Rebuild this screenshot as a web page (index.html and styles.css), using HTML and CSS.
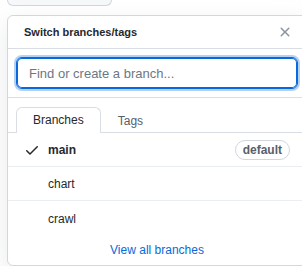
FILE: index.html
```html
<!DOCTYPE html>
<html lang="en">
  <head>
    <meta charset="UTF-8" />
    <meta name="viewport" content="width=device-width, initial-scale=1.0" />
    <title>Switch branches/tags</title>
    <link rel="stylesheet" href="styles.css">
  </head>
  <body>
    <div class="summary-btn"></div>

    <div class="menu">
      <header class="menu-header">
        <span class="menu-title">Switch branches/tags</span>
        <button class="menu-close" aria-label="Close menu">
          <svg width="16" height="16" viewBox="0 0 16 16" aria-hidden="true">
            <path d="M3.72 3.72a.75.75 0 0 1 1.06 0L8 6.94l3.22-3.22a.749.749 0 0 1 1.275.326.749.749 0 0 1-.215.734L9.06 8l3.22 3.22a.749.749 0 0 1-.326 1.275.749.749 0 0 1-.734-.215L8 9.06l-3.22 3.22a.751.751 0 0 1-1.042-.018.751.751 0 0 1-.018-1.042L6.94 8 3.72 4.78a.75.75 0 0 1 0-1.06Z"></path>
          </svg>
        </button>
      </header>

      <div class="menu-filter">
        <input class="filter-input" type="text" placeholder="Find or create a branch..." autofocus />
      </div>

      <nav class="menu-tabs">
        <button class="tab selected">Branches</button>
        <button class="tab">Tags</button>
      </nav>

      <ul class="menu-list">
        <li class="menu-item">
          <svg class="check" width="16" height="16" viewBox="0 0 16 16" aria-hidden="true">
            <path d="M13.78 4.22a.75.75 0 0 1 0 1.06l-7.25 7.25a.75.75 0 0 1-1.06 0L2.22 9.28a.751.751 0 0 1 .018-1.042.751.751 0 0 1 1.042-.018L6 10.94l6.72-6.72a.75.75 0 0 1 1.06 0Z"></path>
          </svg>
          <span class="branch-name current">main</span>
          <span class="label">default</span>
        </li>
        <li class="menu-item">
          <span class="check-space"></span>
          <span class="branch-name">chart</span>
        </li>
        <li class="menu-item">
          <span class="check-space"></span>
          <span class="branch-name">crawl</span>
        </li>
      </ul>

      <footer class="menu-footer">
        <a href="#" class="view-all">View all branches</a>
      </footer>
    </div>
  </body>
</html>
```

FILE: styles.css
```css
:root {
  font-family: "Liberation Sans", Arial, sans-serif;
  color: #24292f;
}

*,
*::before,
*::after {
  box-sizing: border-box;
}

body {
  margin: 0;
  padding: 0 0 0 7px;
  background: #fff;
  overflow: hidden;
}

.summary-btn {
  width: 105px;
  height: 6px;
  background: #f6f8fa;
  border: 1px solid #d0d7de;
  border-top: 0;
  border-radius: 0 0 6px 6px;
}

.menu {
  width: 300px;
  margin-top: 9px;
  background: #fff;
  border: 1px solid #d0d7de;
  border-radius: 6px;
  box-shadow: 0 8px 24px rgba(140, 149, 159, 0.2);
}

.menu-header {
  display: flex;
  align-items: center;
  justify-content: space-between;
  height: 33px;
  padding: 0 16px;
  border-bottom: 1px solid #d8dee4;
}

.menu-title {
  font-size: 11px;
  font-weight: 600;
}

.menu-close {
  display: flex;
  padding: 0;
  margin-right: -3px;
  border: 0;
  background: none;
  fill: #8c959f;
  cursor: pointer;
}

.menu-filter {
  padding: 8px;
  border-bottom: 1px solid #d8dee4;
}

.filter-input {
  display: block;
  width: 100%;
  height: 32px;
  padding: 0 12px;
  font-family: inherit;
  font-size: 13px;
  color: #24292f;
  border: 1px solid #0969da;
  border-radius: 6px;
  outline: none;
  box-shadow: inset 0 0 0 1px #0969da, 0 0 0 2px rgba(9, 105, 218, 0.3);
}

.filter-input::placeholder {
  color: #6e7781;
}

.menu-tabs {
  display: flex;
  padding: 9px 8px 0;
  border-bottom: 1px solid #d8dee4;
}

.tab {
  padding: 5px 16px;
  margin-bottom: -1px;
  font-family: inherit;
  font-size: 12px;
  line-height: 14px;
  color: #57606a;
  background: none;
  border: 1px solid transparent;
  border-bottom: 0;
  border-radius: 6px 6px 0 0;
  cursor: pointer;
}

.tab.selected {
  color: #24292f;
  background: #fff;
  border-color: #d8dee4;
  padding-bottom: 6px;
}

.menu-list {
  margin: 0;
  padding: 0;
  list-style: none;
}

.menu-item {
  display: flex;
  align-items: center;
  gap: 8px;
  height: 34px;
  padding: 1px 16px 0;
  font-size: 12px;
  border-bottom: 1px solid #eaeef2;
}

.menu-item:last-child {
  border-bottom: 0;
}

.check,
.check-space {
  flex: none;
  width: 16px;
  height: 16px;
  fill: #24292f;
}

.branch-name {
  flex: 1;
}

.branch-name.current {
  font-weight: 600;
}

.label {
  padding: 0 7px;
  font-size: 12px;
  font-weight: 600;
  line-height: 18px;
  color: #57606a;
  border: 1px solid #d0d7de;
  border-radius: 2em;
}

.menu-footer {
  padding: 8px 16px;
  text-align: center;
  font-size: 12px;
  line-height: 14px;
}

.view-all {
  color: #0969da;
  text-decoration: none;
}
```
